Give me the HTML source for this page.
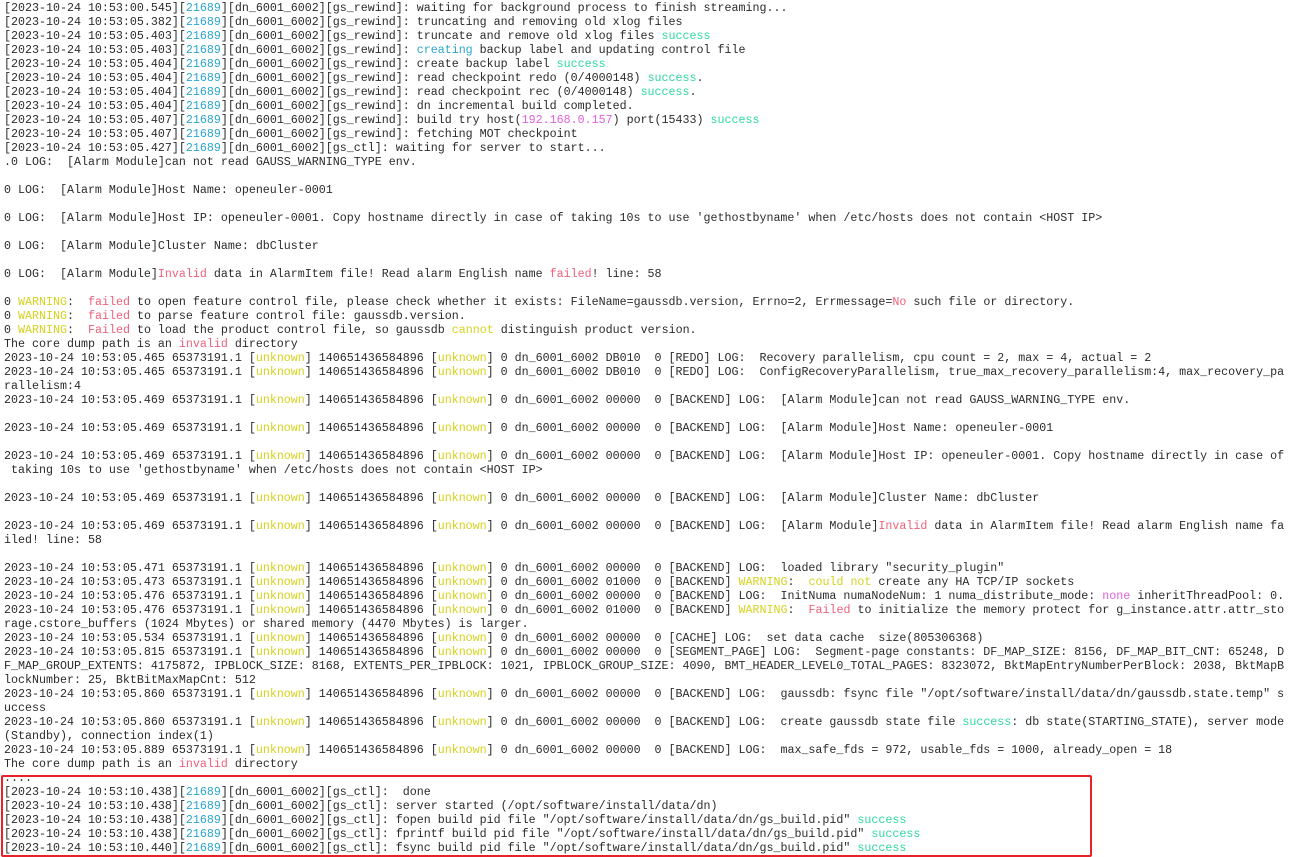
<!DOCTYPE html>
<html><head><meta charset="utf-8"><style>
html,body{margin:0;padding:0;background:#fff;width:1299px;height:857px;overflow:hidden}
pre{margin:0;padding:1px 0 0 4px;font-family:"Liberation Mono",monospace;font-size:11.67px;line-height:14px;color:#2b2b2b;white-space:pre}
.c{color:#2aa6cc}.g{color:#30d8a0}.r{color:#f0607a}.y{color:#d6d21e}.m{color:#e060e0}
.box{position:absolute;left:1px;top:775px;width:1087px;height:78px;border:2px solid #e8222a;border-radius:2px}
</style></head><body>
<pre>[2023-10-24 10:53:00.545][<span class="c">21689</span>][dn_6001_6002][gs_rewind]: waiting for background process to finish streaming...
[2023-10-24 10:53:05.382][<span class="c">21689</span>][dn_6001_6002][gs_rewind]: truncating and removing old xlog files
[2023-10-24 10:53:05.403][<span class="c">21689</span>][dn_6001_6002][gs_rewind]: truncate and remove old xlog files <span class="g">success</span>
[2023-10-24 10:53:05.403][<span class="c">21689</span>][dn_6001_6002][gs_rewind]: <span class="c">creating</span> backup label and updating control file
[2023-10-24 10:53:05.404][<span class="c">21689</span>][dn_6001_6002][gs_rewind]: create backup label <span class="g">success</span>
[2023-10-24 10:53:05.404][<span class="c">21689</span>][dn_6001_6002][gs_rewind]: read checkpoint redo (0/4000148) <span class="g">success</span>.
[2023-10-24 10:53:05.404][<span class="c">21689</span>][dn_6001_6002][gs_rewind]: read checkpoint rec (0/4000148) <span class="g">success</span>.
[2023-10-24 10:53:05.404][<span class="c">21689</span>][dn_6001_6002][gs_rewind]: dn incremental build completed.
[2023-10-24 10:53:05.407][<span class="c">21689</span>][dn_6001_6002][gs_rewind]: build try host(<span class="m">192.168.0.157</span>) port(15433) <span class="g">success</span>
[2023-10-24 10:53:05.407][<span class="c">21689</span>][dn_6001_6002][gs_rewind]: fetching MOT checkpoint
[2023-10-24 10:53:05.427][<span class="c">21689</span>][dn_6001_6002][gs_ctl]: waiting for server to start...
.0 LOG:  [Alarm Module]can not read GAUSS_WARNING_TYPE env.

0 LOG:  [Alarm Module]Host Name: openeuler-0001

0 LOG:  [Alarm Module]Host IP: openeuler-0001. Copy hostname directly in case of taking 10s to use 'gethostbyname' when /etc/hosts does not contain &lt;HOST IP&gt;

0 LOG:  [Alarm Module]Cluster Name: dbCluster

0 LOG:  [Alarm Module]<span class="r">Invalid</span> data in AlarmItem file! Read alarm English name <span class="r">failed</span>! line: 58

0 <span class="y">WARNING</span>:  <span class="r">failed</span> to open feature control file, please check whether it exists: FileName=gaussdb.version, Errno=2, Errmessage=<span class="r">No</span> such file or directory.
0 <span class="y">WARNING</span>:  <span class="r">failed</span> to parse feature control file: gaussdb.version.
0 <span class="y">WARNING</span>:  <span class="r">Failed</span> to load the product control file, so gaussdb <span class="y">cannot</span> distinguish product version.
The core dump path is an <span class="r">invalid</span> directory
2023-10-24 10:53:05.465 65373191.1 [<span class="y">unknown</span>] 140651436584896 [<span class="y">unknown</span>] 0 dn_6001_6002 DB010  0 [REDO] LOG:  Recovery parallelism, cpu count = 2, max = 4, actual = 2
2023-10-24 10:53:05.465 65373191.1 [<span class="y">unknown</span>] 140651436584896 [<span class="y">unknown</span>] 0 dn_6001_6002 DB010  0 [REDO] LOG:  ConfigRecoveryParallelism, true_max_recovery_parallelism:4, max_recovery_pa
rallelism:4
2023-10-24 10:53:05.469 65373191.1 [<span class="y">unknown</span>] 140651436584896 [<span class="y">unknown</span>] 0 dn_6001_6002 00000  0 [BACKEND] LOG:  [Alarm Module]can not read GAUSS_WARNING_TYPE env.

2023-10-24 10:53:05.469 65373191.1 [<span class="y">unknown</span>] 140651436584896 [<span class="y">unknown</span>] 0 dn_6001_6002 00000  0 [BACKEND] LOG:  [Alarm Module]Host Name: openeuler-0001

2023-10-24 10:53:05.469 65373191.1 [<span class="y">unknown</span>] 140651436584896 [<span class="y">unknown</span>] 0 dn_6001_6002 00000  0 [BACKEND] LOG:  [Alarm Module]Host IP: openeuler-0001. Copy hostname directly in case of
 taking 10s to use 'gethostbyname' when /etc/hosts does not contain &lt;HOST IP&gt;

2023-10-24 10:53:05.469 65373191.1 [<span class="y">unknown</span>] 140651436584896 [<span class="y">unknown</span>] 0 dn_6001_6002 00000  0 [BACKEND] LOG:  [Alarm Module]Cluster Name: dbCluster

2023-10-24 10:53:05.469 65373191.1 [<span class="y">unknown</span>] 140651436584896 [<span class="y">unknown</span>] 0 dn_6001_6002 00000  0 [BACKEND] LOG:  [Alarm Module]<span class="r">Invalid</span> data in AlarmItem file! Read alarm English name fa
iled! line: 58

2023-10-24 10:53:05.471 65373191.1 [<span class="y">unknown</span>] 140651436584896 [<span class="y">unknown</span>] 0 dn_6001_6002 00000  0 [BACKEND] LOG:  loaded library "security_plugin"
2023-10-24 10:53:05.473 65373191.1 [<span class="y">unknown</span>] 140651436584896 [<span class="y">unknown</span>] 0 dn_6001_6002 01000  0 [BACKEND] <span class="y">WARNING</span>:  <span class="y">could not</span> create any HA TCP/IP sockets
2023-10-24 10:53:05.476 65373191.1 [<span class="y">unknown</span>] 140651436584896 [<span class="y">unknown</span>] 0 dn_6001_6002 00000  0 [BACKEND] LOG:  InitNuma numaNodeNum: 1 numa_distribute_mode: <span class="m">none</span> inheritThreadPool: 0.
2023-10-24 10:53:05.476 65373191.1 [<span class="y">unknown</span>] 140651436584896 [<span class="y">unknown</span>] 0 dn_6001_6002 01000  0 [BACKEND] <span class="y">WARNING</span>:  <span class="r">Failed</span> to initialize the memory protect for g_instance.attr.attr_sto
rage.cstore_buffers (1024 Mbytes) or shared memory (4470 Mbytes) is larger.
2023-10-24 10:53:05.534 65373191.1 [<span class="y">unknown</span>] 140651436584896 [<span class="y">unknown</span>] 0 dn_6001_6002 00000  0 [CACHE] LOG:  set data cache  size(805306368)
2023-10-24 10:53:05.815 65373191.1 [<span class="y">unknown</span>] 140651436584896 [<span class="y">unknown</span>] 0 dn_6001_6002 00000  0 [SEGMENT_PAGE] LOG:  Segment-page constants: DF_MAP_SIZE: 8156, DF_MAP_BIT_CNT: 65248, D
F_MAP_GROUP_EXTENTS: 4175872, IPBLOCK_SIZE: 8168, EXTENTS_PER_IPBLOCK: 1021, IPBLOCK_GROUP_SIZE: 4090, BMT_HEADER_LEVEL0_TOTAL_PAGES: 8323072, BktMapEntryNumberPerBlock: 2038, BktMapB
lockNumber: 25, BktBitMaxMapCnt: 512
2023-10-24 10:53:05.860 65373191.1 [<span class="y">unknown</span>] 140651436584896 [<span class="y">unknown</span>] 0 dn_6001_6002 00000  0 [BACKEND] LOG:  gaussdb: fsync file "/opt/software/install/data/dn/gaussdb.state.temp" s
uccess
2023-10-24 10:53:05.860 65373191.1 [<span class="y">unknown</span>] 140651436584896 [<span class="y">unknown</span>] 0 dn_6001_6002 00000  0 [BACKEND] LOG:  create gaussdb state file <span class="g">success</span>: db state(STARTING_STATE), server mode
(Standby), connection index(1)
2023-10-24 10:53:05.889 65373191.1 [<span class="y">unknown</span>] 140651436584896 [<span class="y">unknown</span>] 0 dn_6001_6002 00000  0 [BACKEND] LOG:  max_safe_fds = 972, usable_fds = 1000, already_open = 18
The core dump path is an <span class="r">invalid</span> directory
....
[2023-10-24 10:53:10.438][<span class="c">21689</span>][dn_6001_6002][gs_ctl]:  done
[2023-10-24 10:53:10.438][<span class="c">21689</span>][dn_6001_6002][gs_ctl]: server started (/opt/software/install/data/dn)
[2023-10-24 10:53:10.438][<span class="c">21689</span>][dn_6001_6002][gs_ctl]: fopen build pid file "/opt/software/install/data/dn/gs_build.pid" <span class="g">success</span>
[2023-10-24 10:53:10.438][<span class="c">21689</span>][dn_6001_6002][gs_ctl]: fprintf build pid file "/opt/software/install/data/dn/gs_build.pid" <span class="g">success</span>
[2023-10-24 10:53:10.440][<span class="c">21689</span>][dn_6001_6002][gs_ctl]: fsync build pid file "/opt/software/install/data/dn/gs_build.pid" <span class="g">success</span>
[2023-10-24 10:53:10.440][<span class="c">21689</span>][dn_6001_6002][gs_ctl]: </pre>
<div class="box"></div>
</body></html>
